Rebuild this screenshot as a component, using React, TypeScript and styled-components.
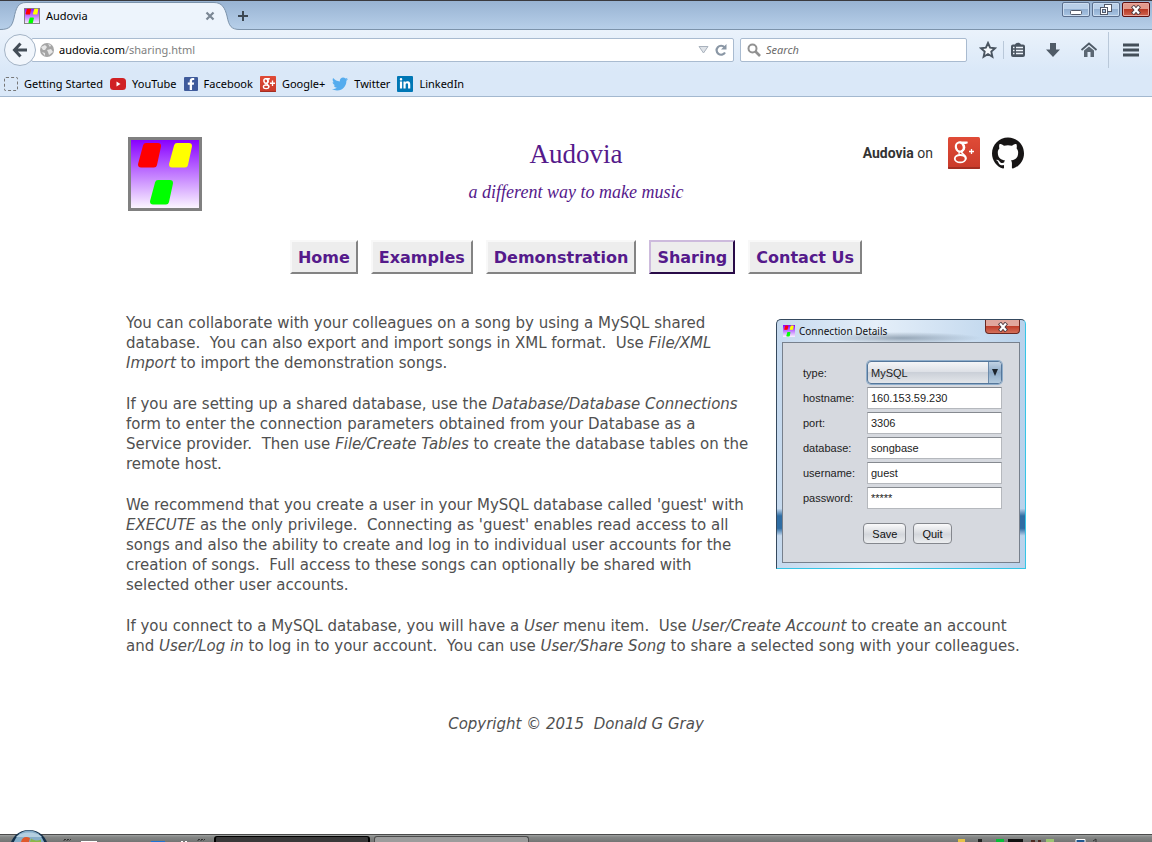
import React from "react";
import styled, { createGlobalStyle } from "styled-components";
import { SiGithub } from "react-icons/si";
import { FaTwitter, FaFacebookF, FaLinkedinIn } from "react-icons/fa";

const ui = '"Noto Sans", "Open Sans", sans-serif';

const GlobalStyle = createGlobalStyle`
  * { box-sizing: border-box; }
  body { margin: 0; background: #fff; }
  button, input, select { font: inherit; margin: 0; }
`;

const Window = styled.div`
  display: flex;
  flex-direction: column;
  min-height: 100vh;
`;

/* ---------- browser chrome ---------- */

const Chrome = styled.header`
  font: 12px/16px ${ui};
  color: #000;
  border-bottom: 1px solid #a3b8cf;
  background: #dae8f8;
`;

const TabStrip = styled.div`
  display: flex;
  align-items: flex-start;
  height: 30px;
  border-top: 1px solid #3a3a3e;
  background: linear-gradient(#98b3d2, #b8d0ea);
  box-shadow: inset 0 -1px #7c93ab;
`;

const Tab = styled.div`
  position: relative;
  display: flex;
  align-items: center;
  gap: 6px;
  width: 240px;
  height: 29px;
  padding: 0 24px;
  font-size: 11px;
`;

const TabShape = styled.svg`
  position: absolute;
  inset: 0;
  z-index: 0;
`;

const TabTitle = styled.span`
  position: relative;
  flex: 1;
`;

const IconButton = styled.button`
  position: relative;
  display: grid;
  place-items: center;
  flex: none;
  padding: 0;
  border: 0;
  background: none;
  color: #4d5a66;
`;

const NewTab = styled(IconButton)`
  width: 14px;
  height: 29px;
  margin-right: auto;
  margin-left: -4px;
`;

const WindowButtons = styled.div`
  display: flex;
  gap: 2px;
  padding: 1px 2px 0 0;
`;

const WindowButton = styled.button<{ $close?: boolean }>`
  display: grid;
  place-items: center;
  width: 28px;
  height: 15px;
  padding: 0;
  border: 1px solid ${(p) => (p.$close ? "#5d1010" : "#5b6f8d")};
  border-radius: 2px;
  box-shadow: inset 0 0 0 1px ${(p) => (p.$close ? "#e9a79d" : "#cbdcef")};
  background: ${(p) =>
    p.$close
      ? "linear-gradient(#e29a8c 50%, #b93a25 50%, #cf6450)"
      : "linear-gradient(#b9cfe8 50%, #93b0d2 50%, #a9c5e3)"};
`;

const NavBar = styled.div`
  display: flex;
  align-items: center;
  height: 41px;
  padding: 0 12px 2px 4px;
  background: linear-gradient(#eaf2fb, #dae8f8);
`;

const BackButton = styled.button`
  position: relative;
  z-index: 1;
  display: grid;
  place-items: center;
  flex: none;
  width: 32px;
  height: 32px;
  padding: 0;
  border: 1px solid #a3b3c5;
  border-radius: 50%;
  background: #f1f6fc;
`;

const Field = styled.div`
  display: flex;
  align-items: center;
  flex: 1 1 0;
  min-width: 0;
  height: 24px;
  border: 1px solid #a9bbd0;
  border-radius: 2px;
  background: #fff;
`;

const AddressField = styled(Field)`
  margin-left: -5px;
  padding: 0 5px 0 8px;
  gap: 5px;
  font-size: 11px;
  color: #808080;
`;

const Address = styled.span`
  flex: 1;
  b { font-weight: 400; color: #000; }
`;

const SearchField = styled(Field)`
  flex: 0 0 227px;
  margin-left: 6px;
  padding-left: 6px;
  gap: 5px;
`;

const SearchInput = styled.input`
  flex: 1;
  min-width: 0;
  padding: 0;
  border: 0;
  outline: 0;
  background: none;
  font-size: 11px;
  font-style: italic;
  &::placeholder { color: #6a6a6a; opacity: 1; }
`;

const Tools = styled.div`
  display: flex;
  align-items: center;
  margin-left: 12px;
`;

const Tool = styled(IconButton)<{ $gap?: number }>`
  width: 18px;
  height: 18px;
  margin-left: ${(p) => p.$gap ?? 0}px;
`;

const Divider = styled.span<{ $tall?: boolean }>`
  width: 1px;
  height: ${(p) => (p.$tall ? 36 : 18)}px;
  margin-left: ${(p) => (p.$tall ? 10 : 6)}px;
  background: #b9c8d9;
`;

const Bookmarks = styled.nav`
  display: flex;
  align-items: center;
  gap: 7px;
  height: 25px;
  padding-left: 4px;
`;

const Bookmark = styled.a`
  display: flex;
  align-items: center;
  gap: 6px;
  color: #000;
  text-decoration: none;
  font-size: 11px;
`;

const Blank = styled.span`
  width: 14px;
  height: 14px;
  border: 1px dashed #777;
  border-radius: 2px;
`;

const Badge = styled.span<{ $bg: string; $size: number }>`
  display: grid;
  place-items: center;
  width: ${(p) => p.$size}px;
  height: ${(p) => p.$size}px;
  border-radius: 1px;
  background: ${(p) => p.$bg};
  color: #fff;
`;

/* ---------- page ---------- */

const Page = styled.main`
  flex: 1;
  width: 100%;
  max-width: 900px;
  margin: 0 auto;
  padding-top: 40px;
  font: 15px/20px "DejaVu Sans", Verdana, sans-serif;
  color: #505050;
`;

const Masthead = styled.div`
  display: grid;
  grid-template-columns: 1fr auto 1fr;
  align-items: start;
  padding: 0 2px;
`;

const Logo = styled.a`
  display: block;
  width: 74px;
  height: 74px;
  border: 3px solid #808080;
`;

const Heading = styled.div`
  text-align: center;
  color: #551a8b;
  font-family: "Liberation Serif", serif;
`;

const Title = styled.h1`
  margin: 0;
  font-size: 27px;
  line-height: 35px;
  font-weight: 400;
`;

const Tagline = styled.p`
  margin: 2px 0 0;
  font-size: 18px;
  line-height: 36px;
  font-style: italic;
`;

const Social = styled.div`
  display: flex;
  align-items: center;
  justify-content: flex-end;
  gap: 12px;
  font: 14px/16px Roboto, sans-serif;
  color: #333;
  span { margin-right: 3px; }
  a { display: block; width: 32px; height: 32px; }
`;

const Menu = styled.nav`
  display: flex;
  justify-content: center;
  gap: 13px;
  margin: 29px 0 39px;
`;

const MenuLink = styled.a<{ $current?: boolean }>`
  padding: 6px 6px 4px;
  border: 2px solid;
  border-color: ${(p) =>
    p.$current ? "#cdbbdd #290b48 #290b48 #cdbbdd" : "#f8f8f8 #838383 #838383 #f8f8f8"};
  background: #ededed;
  color: #551a8b;
  font-size: 16px;
  font-weight: 700;
  text-decoration: none;
`;

const Paragraph = styled.p`
  margin: 0 0 21px;
`;

const Copyright = styled.footer`
  margin-top: 58px;
  text-align: center;
  font-style: italic;
`;

/* ---------- dialog ---------- */

const Dialog = styled.form`
  float: right;
  width: 250px;
  height: 250px;
  margin: 6px 0 0 24px;
  padding: 0 5px 6px;
  border: 1px solid #35495e;
  border-right-color: #34c5e6;
  border-bottom-color: #34c5e6;
  border-radius: 5px 5px 0 0;
  background:
    radial-gradient(80px 6px at 124px 18px, rgba(90, 110, 130, 0.55), transparent),
    linear-gradient(transparent 76%, #2f6da3 79%, #2f6da3 84%, transparent 87%),
    linear-gradient(90deg, #c5d9ee, #e5eff9 40%, #b9d2eb);
  font: 11px/14px "Liberation Sans", Arial, sans-serif;
  color: #222;
`;

const DialogBar = styled.div`
  display: flex;
  align-items: center;
  gap: 4px;
  height: 22px;
  padding-left: 1px;
  font: 10px/14px ${ui};
  color: #111;
  span { flex: 1; }
`;

const DialogClose = styled.button`
  display: grid;
  place-items: center;
  align-self: flex-start;
  width: 35px;
  height: 14px;
  padding: 0;
  border: 1px solid #692822;
  border-top: 0;
  border-radius: 0 0 4px 4px;
  background: linear-gradient(#e1a79d 45%, #bf3e2b 50%, #d4705a);
`;

const DialogBody = styled.div`
  height: 221px;
  padding: 17px 17px 0 20px;
  border: 1px solid #77808c;
  background: #d6d9df;
`;

const Row = styled.div`
  display: grid;
  grid-template-columns: 64px 1fr;
  align-items: center;
  height: 25px;
`;

const TextInput = styled.input`
  width: 100%;
  height: 22px;
  padding: 0 3px;
  border: 1px solid #b5b8bd;
  border-top-color: #868a90;
  background: #fff;
  color: #222;
`;

const SelectWrap = styled.div`
  position: relative;
`;

const Select = styled.select`
  display: block;
  width: 100%;
  height: 23px;
  padding: 0 3px;
  appearance: none;
  border: 1px solid #55779b;
  border-radius: 4px;
  box-shadow: 0 0 0 1px #8fadca;
  background: linear-gradient(#f4f5f7, #dcdfe5 50%, #cbd0d8 50%, #e3e6ea);
  color: #222;
`;

const SelectArrow = styled.span`
  position: absolute;
  top: 1px;
  right: 1px;
  display: grid;
  place-items: center;
  width: 13px;
  height: 21px;
  border-left: 1px solid #6c8bab;
  border-radius: 0 3px 3px 0;
  background: linear-gradient(#c2d3e4, #8eabc8 50%, #b3cbdf);
  pointer-events: none;
`;

const DialogActions = styled.div`
  display: flex;
  justify-content: center;
  gap: 7px;
  margin-top: 13px;
  padding-left: 10px;
`;

const DialogButton = styled.button`
  height: 21px;
  padding: 0 8px;
  border: 1px solid #84878d;
  border-radius: 4px;
  background: linear-gradient(#fafafb, #d4d7dc 55%, #eceef0);
  color: #111;
`;

/* ---------- taskbar ---------- */

const Taskbar = styled.footer`
  position: relative;
  display: flex;
  align-items: flex-end;
  height: 8px;
  border-top: 1px solid #4b4b4b;
  background: linear-gradient(#a0a3a2, #858786 2px, #737574);
`;

const Orb = styled.svg`
  position: absolute;
  left: 9px;
  bottom: 0;
`;

const TrayIcons = styled.svg`
  flex: none;
`;

const Task = styled.div<{ $active?: boolean }>`
  width: ${(p) => (p.$active ? 156 : 155)}px;
  height: 6px;
  margin-right: 4px;
  border: 1px solid ${(p) => (p.$active ? "#000" : "#4b4b4b")};
  border-width: ${(p) => (p.$active ? "1px 2px 0" : "1px 1px 0")};
  border-radius: 3px 3px 0 0;
  background: ${(p) => (p.$active ? "#393839" : "#9c9c9c")};
`;

const Spacer = styled.span`
  flex: 1;
`;

/* ---------- drawings ---------- */

const Mark = styled.svg`
  position: relative;
  display: block;
`;

function AudoviaMark({ size, framed }: { size: number; framed?: boolean }) {
  const id = `fade${size}`;
  return (
    <Mark width={size} height={size} viewBox="0 0 68 68" aria-hidden="true">
      <defs>
        <linearGradient id={id} x1="0" y1="0" x2="0" y2="1">
          <stop offset="0" stopColor="#8800ff" />
          <stop offset="1" stopColor="#fbf5ff" />
        </linearGradient>
      </defs>
      <rect width="68" height="68" fill={`url(#${id})`} />
      {framed && <rect x="2" y="2" width="64" height="64" fill="none" stroke="#808080" strokeWidth="4" />}
      <g strokeWidth="6" strokeLinejoin="round">
        <path d="M15 6H27L23 24.500H10Z" fill="#f00" stroke="#f00" />
        <path d="M46 6H58L54 24.500H41Z" fill="#ff0" stroke="#ff0" />
        <path d="M27 43H39L35 61.500H22Z" fill="#0f0" stroke="#0f0" />
      </g>
    </Mark>
  );
}

function GooglePlus({ size }: { size: number }) {
  const id = `gp${size}`;
  const large = size > 20;
  return (
    <Mark width={size} height={size} viewBox="0 0 32 32" aria-hidden="true">
      <defs>
        <linearGradient id={id} x1="0" y1="0" x2="0" y2="1">
          <stop offset="0" stopColor="#e04b37" />
          <stop offset="1" stopColor="#c93a2a" />
        </linearGradient>
      </defs>
      <rect width="32" height="32" rx="1.500" fill={`url(#${id})`} />
      <path d="M0 31H32" stroke="#962b20" strokeWidth="1.500" />
      <g fill="none" stroke="#fff">
        <ellipse cx="11.800" cy="10" rx="3.900" ry="4.600" strokeWidth={large ? 2.2 : 3} transform="rotate(-14 11.800 10)" />
        <ellipse cx="12.200" cy="21.700" rx="5.400" ry="3.700" strokeWidth={large ? 1.8 : 2.600} />
        <path d="M12 5.400H19.500L17.500 6.300H14.500C17.500 9 17 12 14.500 13.800C13 15 13.500 16 15.500 17.300C18 19 18.500 20.500 17.600 22.500" strokeWidth={large ? 1.6 : 2.400} />
        <path d="M12 14.500C10.500 15.500 10.500 17 12.500 18" strokeWidth="1.200" />
        <path d={large ? "M23.500 12V17M21 14.500H26" : "M25 9V20M20 14.500H30"} strokeWidth={large ? 1.3 : 2.6} />
      </g>
    </Mark>
  );
}

function Cross() {
  return (
    <svg width="12" height="10" viewBox="0 0 12 10" aria-hidden="true">
      <path d="M2.500 1L9.500 9M9.500 1L2.500 9" stroke="#4b3940" strokeWidth="4" />
      <path d="M3 1.500L9 8.500M9 1.500L3 8.500" stroke="#fff" strokeWidth="2.200" />
    </svg>
  );
}

const fields = [
  ["hostname", "160.153.59.230"],
  ["port", "3306"],
  ["database", "songbase"],
  ["username", "guest"],
  ["password", "*****"],
];

const menu = ["Home", "Examples", "Demonstration", "Sharing", "Contact Us"];

function BrowserChrome() {
  return (
    <Chrome>
      <TabStrip>
        <Tab>
          <TabShape width="240" height="29" viewBox="0 0 240 29" aria-hidden="true">
            <path
              d="M0 29V28.500C10 28.500 12 25 14 17C16 7 18 1.500 26 1.500H214C222 1.500 225 7 227 15C229 25 231 28.500 240 28.500V29Z"
              fill="#edf4fc"
            />
            <path
              d="M0 28.500C10 28.500 12 25 14 17C16 7 18 1.500 26 1.500H214C222 1.500 225 7 227 15C229 25 231 28.500 240 28.500"
              fill="none"
              stroke="#7c93ab"
            />
          </TabShape>
          <AudoviaMark size={16} framed />
          <TabTitle>Audovia</TabTitle>
          <IconButton type="button" aria-label="Close tab">
            <svg width="12" height="12" viewBox="0 0 12 12">
              <path d="M2.500 2.500L9.500 9.500M9.500 2.500L2.500 9.500" stroke="#7b8794" strokeWidth="2.200" />
            </svg>
          </IconButton>
        </Tab>
        <NewTab type="button" aria-label="New tab">
          <svg width="12" height="12" viewBox="0 0 12 12">
            <path d="M6 1V11M1 6H11" stroke="#3c4752" strokeWidth="2" />
          </svg>
        </NewTab>
        <WindowButtons>
          <WindowButton type="button" aria-label="Minimize">
            <svg width="12" height="11" viewBox="0 0 12 11">
              <rect x=".5" y="6.500" width="11" height="4" rx="1" fill="#fff" stroke="#535a6a" />
            </svg>
          </WindowButton>
          <WindowButton type="button" aria-label="Restore">
            <svg width="12" height="11" viewBox="0 0 12 11" fill="#fff" stroke="#535a6a">
              <rect x="4.500" y=".5" width="7" height="7" />
              <rect x=".5" y="3.500" width="7" height="7" />
              <rect x="2.500" y="5.500" width="3" height="3" fill="#a9c5e3" />
            </svg>
          </WindowButton>
          <WindowButton type="button" aria-label="Close" $close>
            <Cross />
          </WindowButton>
        </WindowButtons>
      </TabStrip>
      <NavBar>
        <BackButton type="button" aria-label="Back">
          <svg width="16" height="16" viewBox="0 0 16 16" fill="none" stroke="#434d57" strokeWidth="3">
            <path d="M8.500 1.500L2.500 8L8.500 14.500M3 8H15" />
          </svg>
        </BackButton>
        <AddressField>
          <svg width="14" height="14" viewBox="0 0 14 14" aria-hidden="true">
            <circle cx="7" cy="7" r="7" fill="#a5a5a5" />
            <path d="M1 4L5 2L7 4L5 7L3 7ZM8 1L11 2L10 4ZM7 7L11 6L13 9L9 12L8 9ZM2 9L5 10L5 13Z" fill="#e6e6e6" />
          </svg>
          <Address><b>audovia.com</b>/sharing.html</Address>
          <svg width="11" height="9" viewBox="0 0 11 9" aria-hidden="true">
            <path d="M1 1.500H10L5.500 8Z" fill="#dfe3e8" stroke="#a9b2bd" />
          </svg>
          <IconButton type="button" aria-label="Reload">
            <svg width="14" height="14" viewBox="0 0 14 14">
              <path d="M10.500 4.300A4.500 4.500 0 1 0 11 9.500" fill="none" stroke="#8a97a5" strokeWidth="2.200" />
              <path d="M12.500 1V6.500H7Z" fill="#8a97a5" />
            </svg>
          </IconButton>
        </AddressField>
        <SearchField>
          <svg width="14" height="14" viewBox="0 0 14 14" fill="none" stroke="#919191" aria-hidden="true">
            <circle cx="5.500" cy="5.500" r="4" strokeWidth="2" />
            <path d="M8.500 8.500L13 13" strokeWidth="2.600" />
          </svg>
          <SearchInput aria-label="Search" placeholder="Search" />
        </SearchField>
        <Tools>
          <Tool type="button" aria-label="Bookmark this page">
            <svg width="18" height="18" viewBox="0 0 18 18">
              <path d="M9 2L11.100 6.700L16 7.200L12.300 10.600L13.400 15.700L9 13L4.600 15.700L5.700 10.600L2 7.200L6.900 6.700Z" fill="#f5f9fd" stroke="#4a5561" strokeWidth="1.900" />
            </svg>
          </Tool>
          <Divider />
          <Tool type="button" aria-label="Bookmarks" $gap={5}>
            <svg width="18" height="18" viewBox="0 0 18 18">
              <path d="M2 5.500Q2 3.500 4 3.500H6C7 1 11 1 12 3.500H14Q16 3.500 16 5.500V14Q16 16 14 16H4Q2 16 2 14Z" fill="#4a5561" />
              <path d="M4 6.500H5.500M7 6.500H14M4 9.500H5.500M7 9.500H14M4 12.500H5.500M7 12.500H14" stroke="#edf4fb" strokeWidth="1.600" />
            </svg>
          </Tool>
          <Tool type="button" aria-label="Downloads" $gap={17}>
            <svg width="18" height="18" viewBox="0 0 18 18">
              <path d="M6 2H12V8.500H16L9 16L2 8.500H6Z" fill="#4f5b67" />
            </svg>
          </Tool>
          <Tool type="button" aria-label="Home" $gap={18}>
            <svg width="18" height="18" viewBox="0 0 18 18">
              <path d="M1.500 9L9 2.500L16.500 9" fill="none" stroke="#4f5b67" strokeWidth="1.800" />
              <path d="M4 9.500L9 5.500L14 9.500V16H10.500V11H7.500V16H4Z" fill="#5b6773" />
            </svg>
          </Tool>
          <Divider $tall />
          <Tool type="button" aria-label="Open menu" $gap={13}>
            <svg width="18" height="18" viewBox="0 0 18 18">
              <path d="M1 4H17M1 9H17M1 14H17" stroke="#434e59" strokeWidth="3" />
            </svg>
          </Tool>
        </Tools>
      </NavBar>
      <Bookmarks aria-label="Bookmarks toolbar">
        <Bookmark href="#start"><Blank />Getting Started</Bookmark>
        <Bookmark href="#youtube">
          <svg width="16" height="12" viewBox="0 0 16 12" aria-hidden="true">
            <rect width="16" height="12" rx="3.500" fill="#d02124" />
            <path d="M6.500 3.500V8.500L10.500 6Z" fill="#fff" />
          </svg>
          YouTube
        </Bookmark>
        <Bookmark href="#facebook"><Badge $bg="#3f5b9b" $size={14}><FaFacebookF size={12} /></Badge>Facebook</Bookmark>
        <Bookmark href="#google"><GooglePlus size={16} />Google+</Bookmark>
        <Bookmark href="#twitter"><FaTwitter size={16} color="#55acee" />Twitter</Bookmark>
        <Bookmark href="#linkedin"><Badge $bg="#0077b5" $size={16}><FaLinkedinIn size={12} /></Badge>LinkedIn</Bookmark>
      </Bookmarks>
    </Chrome>
  );
}

function ConnectionDialog() {
  return (
    <Dialog onSubmit={(e) => e.preventDefault()}>
      <DialogBar>
        <AudoviaMark size={12} />
        <span>Connection Details</span>
        <DialogClose type="button" aria-label="Close dialog"><Cross /></DialogClose>
      </DialogBar>
      <DialogBody>
        <Row>
          <label htmlFor="type">type:</label>
          <SelectWrap>
            <Select id="type"><option>MySQL</option></Select>
            <SelectArrow>
              <svg width="6" height="7" viewBox="0 0 6 7"><path d="M0 0H6L3 7Z" fill="#1c242c" /></svg>
            </SelectArrow>
          </SelectWrap>
        </Row>
        {fields.map(([name, value]) => (
          <Row key={name}>
            <label htmlFor={name}>{name}:</label>
            <TextInput id={name} defaultValue={value} />
          </Row>
        ))}
        <DialogActions>
          <DialogButton type="submit">Save</DialogButton>
          <DialogButton type="button">Quit</DialogButton>
        </DialogActions>
      </DialogBody>
    </Dialog>
  );
}

export default function App() {
  return (
    <Window>
      <GlobalStyle />
      <BrowserChrome />
      <Page>
        <Masthead>
          <Logo href="#home" aria-label="Audovia home"><AudoviaMark size={68} /></Logo>
          <Heading>
            <Title>Audovia</Title>
            <Tagline>a different way to make music</Tagline>
          </Heading>
          <Social>
            <span><b>Audovia</b> on</span>
            <a href="#googleplus" aria-label="Google+"><GooglePlus size={32} /></a>
            <a href="#github" aria-label="GitHub"><SiGithub size={32} color="#171515" /></a>
          </Social>
        </Masthead>
        <Menu>
          {menu.map((item) => (
            <MenuLink key={item} href={`#${item}`} $current={item === "Sharing"}>{item}</MenuLink>
          ))}
        </Menu>
        <ConnectionDialog />
        <Paragraph>
          You can collaborate with your colleagues on a song by using a MySQL shared database.&nbsp; You can also
          export and import songs in XML format.&nbsp; Use <i>File/XML Import</i> to import the demonstration songs.
        </Paragraph>
        <Paragraph>
          If you are setting up a shared database, use the <i>Database/Database Connections</i> form to enter the
          connection parameters obtained from your Database as a Service provider.&nbsp; Then
          use <i>File/Create Tables</i> to create the database tables on the remote host.
        </Paragraph>
        <Paragraph>
          We recommend that you create a user in your MySQL database called 'guest' with <i>EXECUTE</i> as the only
          privilege.&nbsp; Connecting as 'guest' enables read access to all songs and also the ability to create and
          log in to individual user accounts for the creation of songs.&nbsp; Full access to these songs can
          optionally be shared with selected other user accounts.
        </Paragraph>
        <Paragraph>
          If you connect to a MySQL database, you will have a <i>User</i> menu item.&nbsp; Use <i>User/Create
          Account</i> to create an account and <i>User/Log in</i> to log in to your account.&nbsp; You can
          use <i>User/Share Song</i> to share a selected song with your colleagues.
        </Paragraph>
        <Copyright>Copyright © 2015&nbsp; Donald G Gray</Copyright>
      </Page>
      <Taskbar>
        <Orb width="40" height="12" viewBox="0 0 40 12" aria-hidden="true">
          <ellipse cx="20" cy="18" rx="19" ry="18" fill="#14304a" />
          <ellipse cx="20" cy="18" rx="16" ry="17.500" fill="#86adc8" />
          <path d="M7 7C12 1 28 1 33 7Z" fill="#b4cfe0" />
          <path d="M12 12C13 7 17 6 21 8L20 12Z" fill="#e0592a" />
          <path d="M22 8.500C26 11 29 11 32 9.500V12H21Z" fill="#8ab648" />
        </Orb>
        <TrayIcons width="214" height="6" viewBox="0 0 214 6" aria-hidden="true">
          <path d="M64 3.500H71M198 3.500H205" stroke="#333" strokeDasharray="2 1" />
          <path d="M63 4.500H70M197 4.500H204" stroke="#555" strokeDasharray="2 1" />
          <path d="M81 5.500H97M181 5.500H183M185 5.500H187" stroke="#fff" />
          <path d="M151 5.500H165" stroke="#1f73d4" />
        </TrayIcons>
        <Task $active />
        <Task />
        <Spacer />
        <TrayIcons width="194" height="6" viewBox="0 0 194 6" aria-hidden="true">
          <path d="M0 4.500H7" stroke="#e5c248" strokeWidth="3" />
          <path d="M20 4.500H24" stroke="#222" strokeWidth="3" />
          <path d="M38 4.500H46" stroke="#08bd38" strokeWidth="3" />
          <path d="M50 4.500H65" stroke="#111" strokeWidth="3" />
          <path d="M73 5H77M80 5H83" stroke="#4b2a20" strokeWidth="2" />
          <path d="M88 4.500H96" stroke="#9cc373" strokeWidth="3" />
          <path d="M118 6V3.500H127V6" fill="#22588f" stroke="#fff" />
          <path d="M135 5L138 3V6" stroke="#333" fill="none" />
        </TrayIcons>
      </Taskbar>
    </Window>
  );
}
